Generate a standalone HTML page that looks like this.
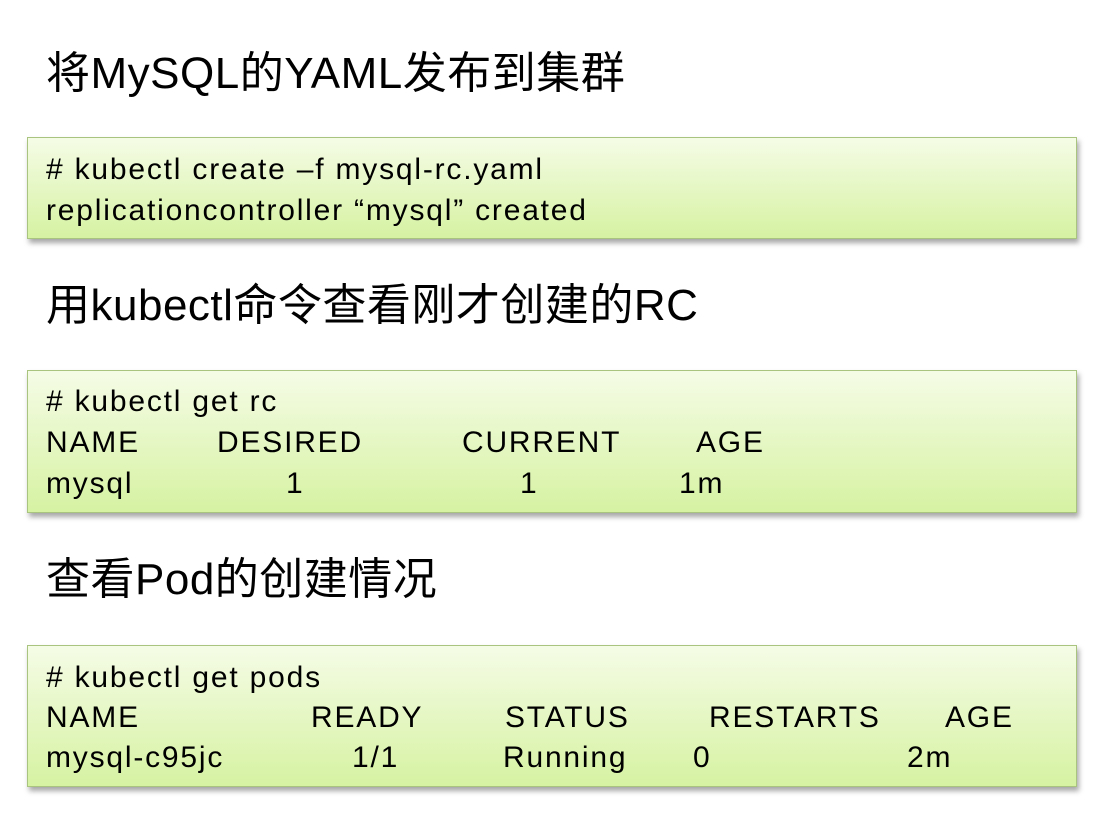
<!DOCTYPE html><html><head><meta charset="utf-8"><style>
body{margin:0;width:1100px;height:831px;background:#fff;position:relative;overflow:hidden;font-family:"Liberation Sans","Noto Sans CJK SC",sans-serif;color:#000}
.h{position:absolute;left:46px;font-size:44px;line-height:44px;white-space:nowrap;letter-spacing:0.5px}
.b{position:absolute;left:27px;width:1048px;border:1px solid #a9c47f;background:linear-gradient(#f5fce6,#d6f2a2);box-shadow:2px 4px 5px rgba(0,0,0,.35)}
.t{position:absolute;font-size:30px;line-height:30px;white-space:nowrap;letter-spacing:1.8px}
</style></head><body>
<div class="h" style="top:52px">将MySQL的YAML发布到集群</div>
<div class="b" style="top:137px;height:100px"></div>
<div class="t" style="left:46px;top:155px"># kubectl create –f mysql-rc.yaml</div>
<div class="t" style="left:46px;top:196px">replicationcontroller “mysql” created</div>
<div class="h" style="top:284px">用kubectl命令查看刚才创建的RC</div>
<div class="b" style="top:370px;height:141px"></div>
<div class="t" style="left:46px;top:387px"># kubectl get rc</div>
<div class="t" style="left:46px;top:428px">NAME</div>
<div class="t" style="left:217px;top:428px">DESIRED</div>
<div class="t" style="left:462px;top:428px">CURRENT</div>
<div class="t" style="left:696px;top:428px">AGE</div>
<div class="t" style="left:46px;top:469px">mysql</div>
<div class="t" style="left:286px;top:469px">1</div>
<div class="t" style="left:520px;top:469px">1</div>
<div class="t" style="left:679px;top:469px">1m</div>
<div class="h" style="top:558px">查看Pod的创建情况</div>
<div class="b" style="top:645px;height:140px"></div>
<div class="t" style="left:46px;top:663px"># kubectl get pods</div>
<div class="t" style="left:46px;top:703px">NAME</div>
<div class="t" style="left:311px;top:703px">READY</div>
<div class="t" style="left:505px;top:703px">STATUS</div>
<div class="t" style="left:709px;top:703px">RESTARTS</div>
<div class="t" style="left:945px;top:703px">AGE</div>
<div class="t" style="left:46px;top:743px">mysql-c95jc</div>
<div class="t" style="left:352px;top:743px">1/1</div>
<div class="t" style="left:503px;top:743px">Running</div>
<div class="t" style="left:693px;top:743px">0</div>
<div class="t" style="left:907px;top:743px">2m</div>
</body></html>
